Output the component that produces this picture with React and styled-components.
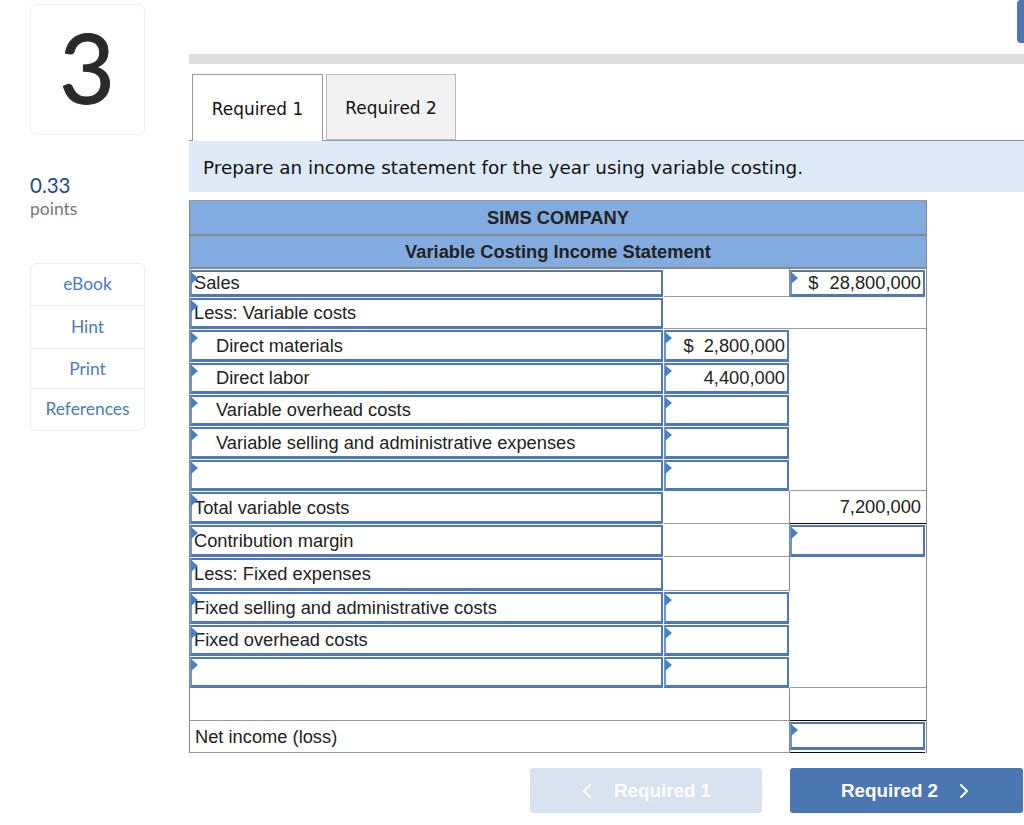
import React from 'react'
import styled, { createGlobalStyle } from 'styled-components'

const GlobalStyle = createGlobalStyle`
  html, body {
    margin: 0;
    padding: 0;
    background: #fff;
    overflow: hidden;
  }
`

const Page = styled.div`
  width: 1024px;
  height: 825px;
  overflow: hidden;
  display: flex;
  font-family: "Liberation Sans", Arial, sans-serif;
  color: #222;
`

const Sidebar = styled.aside`
  width: 115px;
  margin: 4px 44px 0 30px;
  flex-shrink: 0;
  font-family: Lato, "Open Sans", sans-serif;
`

const NumberCard = styled.div`
  box-sizing: border-box;
  height: 131px;
  padding: 0 1px 5px 0;
  border: 1px solid #efefef;
  border-radius: 7px;
  display: flex;
  align-items: center;
  justify-content: center;
  font-size: 96px;
  line-height: 1;
  color: #2a2a2a;
  -webkit-text-stroke: 1px #2a2a2a;
`

const Score = styled.div`
  margin-top: 38px;
  font-size: 20.5px;
  line-height: 24px;
  color: #1f4a8c;
`

const ScoreLabel = styled.div`
  font-size: 17.5px;
  line-height: 24px;
  color: #777;
`

const ToolList = styled.div`
  margin-top: 42px;
  border: 1px solid #ececec;
  border-radius: 6px;
`

const ToolItem = styled.div`
  box-sizing: border-box;
  height: ${p => p.$h}px;
  padding-bottom: ${p => p.$pad}px;
  display: flex;
  align-items: center;
  justify-content: center;
  font-size: 17.4px;
  color: #4a7bbd;
  border-bottom: ${p => (p.$last ? 'none' : '1px solid #ececec')};
`

const Main = styled.main`
  flex: 1;
  min-width: 0;
`

const TopRow = styled.div`
  height: 43px;
  display: flex;
  justify-content: flex-end;
`

const CutOffButton = styled.div`
  width: 7px;
  background: #4a76b2;
  border-radius: 4px 0 0 4px;
`

const GrayBar = styled.div`
  height: 10px;
  margin-top: 11px;
  background: #dedede;
`

const Tabs = styled.div`
  display: flex;
  gap: 3px;
  height: 67px;
  margin-top: 10px;
  padding-left: 3px;
  border-bottom: 1px solid #999;
  box-sizing: border-box;
`

const Tab = styled.div`
  box-sizing: border-box;
  width: ${p => (p.$active ? 131 : 130)}px;
  height: ${p => (p.$active ? 67 : 66)}px;
  padding-top: ${p => (p.$active ? 1 : 2)}px;
  display: flex;
  align-items: center;
  justify-content: center;
  background: ${p => (p.$active ? '#fff' : '#f2f2f2')};
  border: 1px solid ${p => (p.$active ? '#999' : '#bbb')};
  border-bottom: ${p => (p.$active ? 'none' : '1px solid #bbb')};
  font-family: "DejaVu Sans", Verdana, sans-serif;
  font-size: 16.9px;
  color: #111;
`

const Instructions = styled.div`
  box-sizing: border-box;
  height: 51px;
  padding: 1px 14px 0;
  display: flex;
  align-items: center;
  background: #deeaf8;
  font-family: "DejaVu Sans", Verdana, sans-serif;
  font-size: 18.37px;
  color: #111;
`

const Sheet = styled.div`
  box-sizing: border-box;
  width: 738px;
  margin-top: 8px;
  border-left: 1px solid #888;
  border-right: 1px solid #888;
  border-top: 1px solid #999;
`

const Row = styled.div`
  display: grid;
  grid-template-columns: 474px 126px 136px;
  height: ${p => p.$h}px;
`

const Banner = styled.div`
  grid-column: 1 / -1;
  display: flex;
  align-items: center;
  justify-content: center;
  background: #82abdf;
  border-bottom: 2px solid #888;
  font-weight: 700;
  font-size: 18.3px;
`

const Cell = styled.div`
  box-sizing: border-box;
  position: relative;
  min-width: 0;
  grid-column: span ${p => p.$span || 1};
  display: flex;
  align-items: center;
  justify-content: ${p => (p.$right ? 'flex-end' : 'flex-start')};
  padding: ${p => (p.$input ? '0 2px' : '0 5px')};
  padding-left: ${p => (p.$indent ? '24px' : p.$input ? '2px' : '5px')};
  font-size: 18.3px;
  border-right: 1px solid #888;
  border-bottom: ${p => (p.$open ? '0' : '1px solid #999')};
  border-bottom-color: ${p => (p.$dark ? '#000' : '#999')};
  background-color: #fff;

  &:last-child {
    border-right: none;
  }

  ${p => p.$input && `
    border: 2px solid #4f79b4;
    border-left-color: #6b97d3;
    border-bottom-width: 3px;
    margin: 1px 1px 0 0;

    &:last-child {
      border-right: 2px solid #4f79b4;
    }

    &::before {
      content: "";
      position: absolute;
      left: -1px;
      top: 0;
      border-left: 7px solid #4a7fc1;
      border-top: 6px solid transparent;
      border-bottom: 6px solid transparent;
    }
  `}
  ${p => p.$input && p.$dark && `
    box-shadow: 0 1px 0 #000;
  `}
  ${p => p.$underline && `
    margin-bottom: 3px;
    box-shadow: 0 2px 0 #fff, 0 3px 0 #111;
  `}
`

const Amount = styled.div`
  display: flex;
  justify-content: flex-end;
  gap: ${p => p.$gap}px;
`

const Footer = styled.div`
  display: flex;
  gap: 28px;
  margin: 15px 0 0 341px;
`

const NavButton = styled.div`
  box-sizing: border-box;
  width: ${p => (p.$next ? 233 : 232)}px;
  height: 45px;
  padding: 1px ${p => (p.$next ? 2 : 0)}px 0 0;
  display: flex;
  align-items: center;
  justify-content: center;
  gap: 10px;
  border-radius: 3px;
  background: ${p => (p.$next ? '#4a76b2' : '#d9e3f0')};
  color: #fff;
  font-weight: 700;
  font-size: 18.8px;
`

const Chevron = styled.svg`
  width: 12px;
  height: 16px;
  margin: ${p => (p.$flip ? '0 11px 0 0' : '0 0 0 10px')};
  fill: none;
  stroke: #fff;
  stroke-width: 2;
  stroke-linecap: round;
  stroke-linejoin: round;
`

const tools = [
  { name: 'eBook', h: 42, pad: 2 },
  { name: 'Hint', h: 43, pad: 2 },
  { name: 'Print', h: 40, pad: 0 },
  { name: 'References', h: 41, pad: 2, last: true },
]

export default function App() {
  return (
    <Page>
      <GlobalStyle />
      <Sidebar>
        <NumberCard>3</NumberCard>
        <Score>0.33</Score>
        <ScoreLabel>points</ScoreLabel>
        <ToolList>
          {tools.map(t => (
            <ToolItem key={t.name} $h={t.h} $pad={t.pad} $last={t.last}>{t.name}</ToolItem>
          ))}
        </ToolList>
      </Sidebar>

      <Main>
        <TopRow><CutOffButton /></TopRow>
        <GrayBar />
        <Tabs>
          <Tab $active>Required 1</Tab>
          <Tab>Required 2</Tab>
        </Tabs>
        <Instructions>Prepare an income statement for the year using variable costing.</Instructions>

        <Sheet>
          <Row $h={35}><Banner>SIMS COMPANY</Banner></Row>
          <Row $h={33}><Banner>Variable Costing Income Statement</Banner></Row>

          <Row $h={28}>
            <Cell $input>Sales</Cell>
            <Cell />
            <Cell $input $right><Amount $gap={11}><span>$</span><span>28,800,000</span></Amount></Cell>
          </Row>
          <Row $h={32}>
            <Cell $input>Less: Variable costs</Cell>
            <Cell $span={2} />
          </Row>
          <Row $h={33}>
            <Cell $input $indent>Direct materials</Cell>
            <Cell $input $right><Amount $gap={10}><span>$</span><span>2,800,000</span></Amount></Cell>
            <Cell $open />
          </Row>
          <Row $h={32}>
            <Cell $input $indent>Direct labor</Cell>
            <Cell $input $right>4,400,000</Cell>
            <Cell $open />
          </Row>
          <Row $h={32}>
            <Cell $input $indent>Variable overhead costs</Cell>
            <Cell $input $right />
            <Cell $open />
          </Row>
          <Row $h={33}>
            <Cell $input $indent>Variable selling and administrative expenses</Cell>
            <Cell $input $right />
            <Cell $open />
          </Row>
          <Row $h={32}>
            <Cell $input />
            <Cell $input $right $dark />
            <Cell />
          </Row>
          <Row $h={33}>
            <Cell $input>Total variable costs</Cell>
            <Cell />
            <Cell $right $dark>7,200,000</Cell>
          </Row>
          <Row $h={33}>
            <Cell $input>Contribution margin</Cell>
            <Cell />
            <Cell $input $right />
          </Row>
          <Row $h={34}>
            <Cell $input>Less: Fixed expenses</Cell>
            <Cell />
            <Cell $open />
          </Row>
          <Row $h={33}>
            <Cell $input>Fixed selling and administrative costs</Cell>
            <Cell $input $right />
            <Cell $open />
          </Row>
          <Row $h={32}>
            <Cell $input>Fixed overhead costs</Cell>
            <Cell $input $right />
            <Cell $open />
          </Row>
          <Row $h={32}>
            <Cell $input />
            <Cell $input $right />
            <Cell />
          </Row>
          <Row $h={33}>
            <Cell $span={2} />
            <Cell $dark />
          </Row>
          <Row $h={32}>
            <Cell $span={2}>Net income (loss)</Cell>
            <Cell $input $right $underline />
          </Row>
        </Sheet>

        <Footer>
          <NavButton>
            <Chevron $flip viewBox="0 0 12 16"><path d="M9 2 3 8l6 6" /></Chevron>
            Required 1
          </NavButton>
          <NavButton $next>
            Required 2
            <Chevron viewBox="0 0 12 16"><path d="M3 2l6 6-6 6" /></Chevron>
          </NavButton>
        </Footer>
      </Main>
    </Page>
  )
}
